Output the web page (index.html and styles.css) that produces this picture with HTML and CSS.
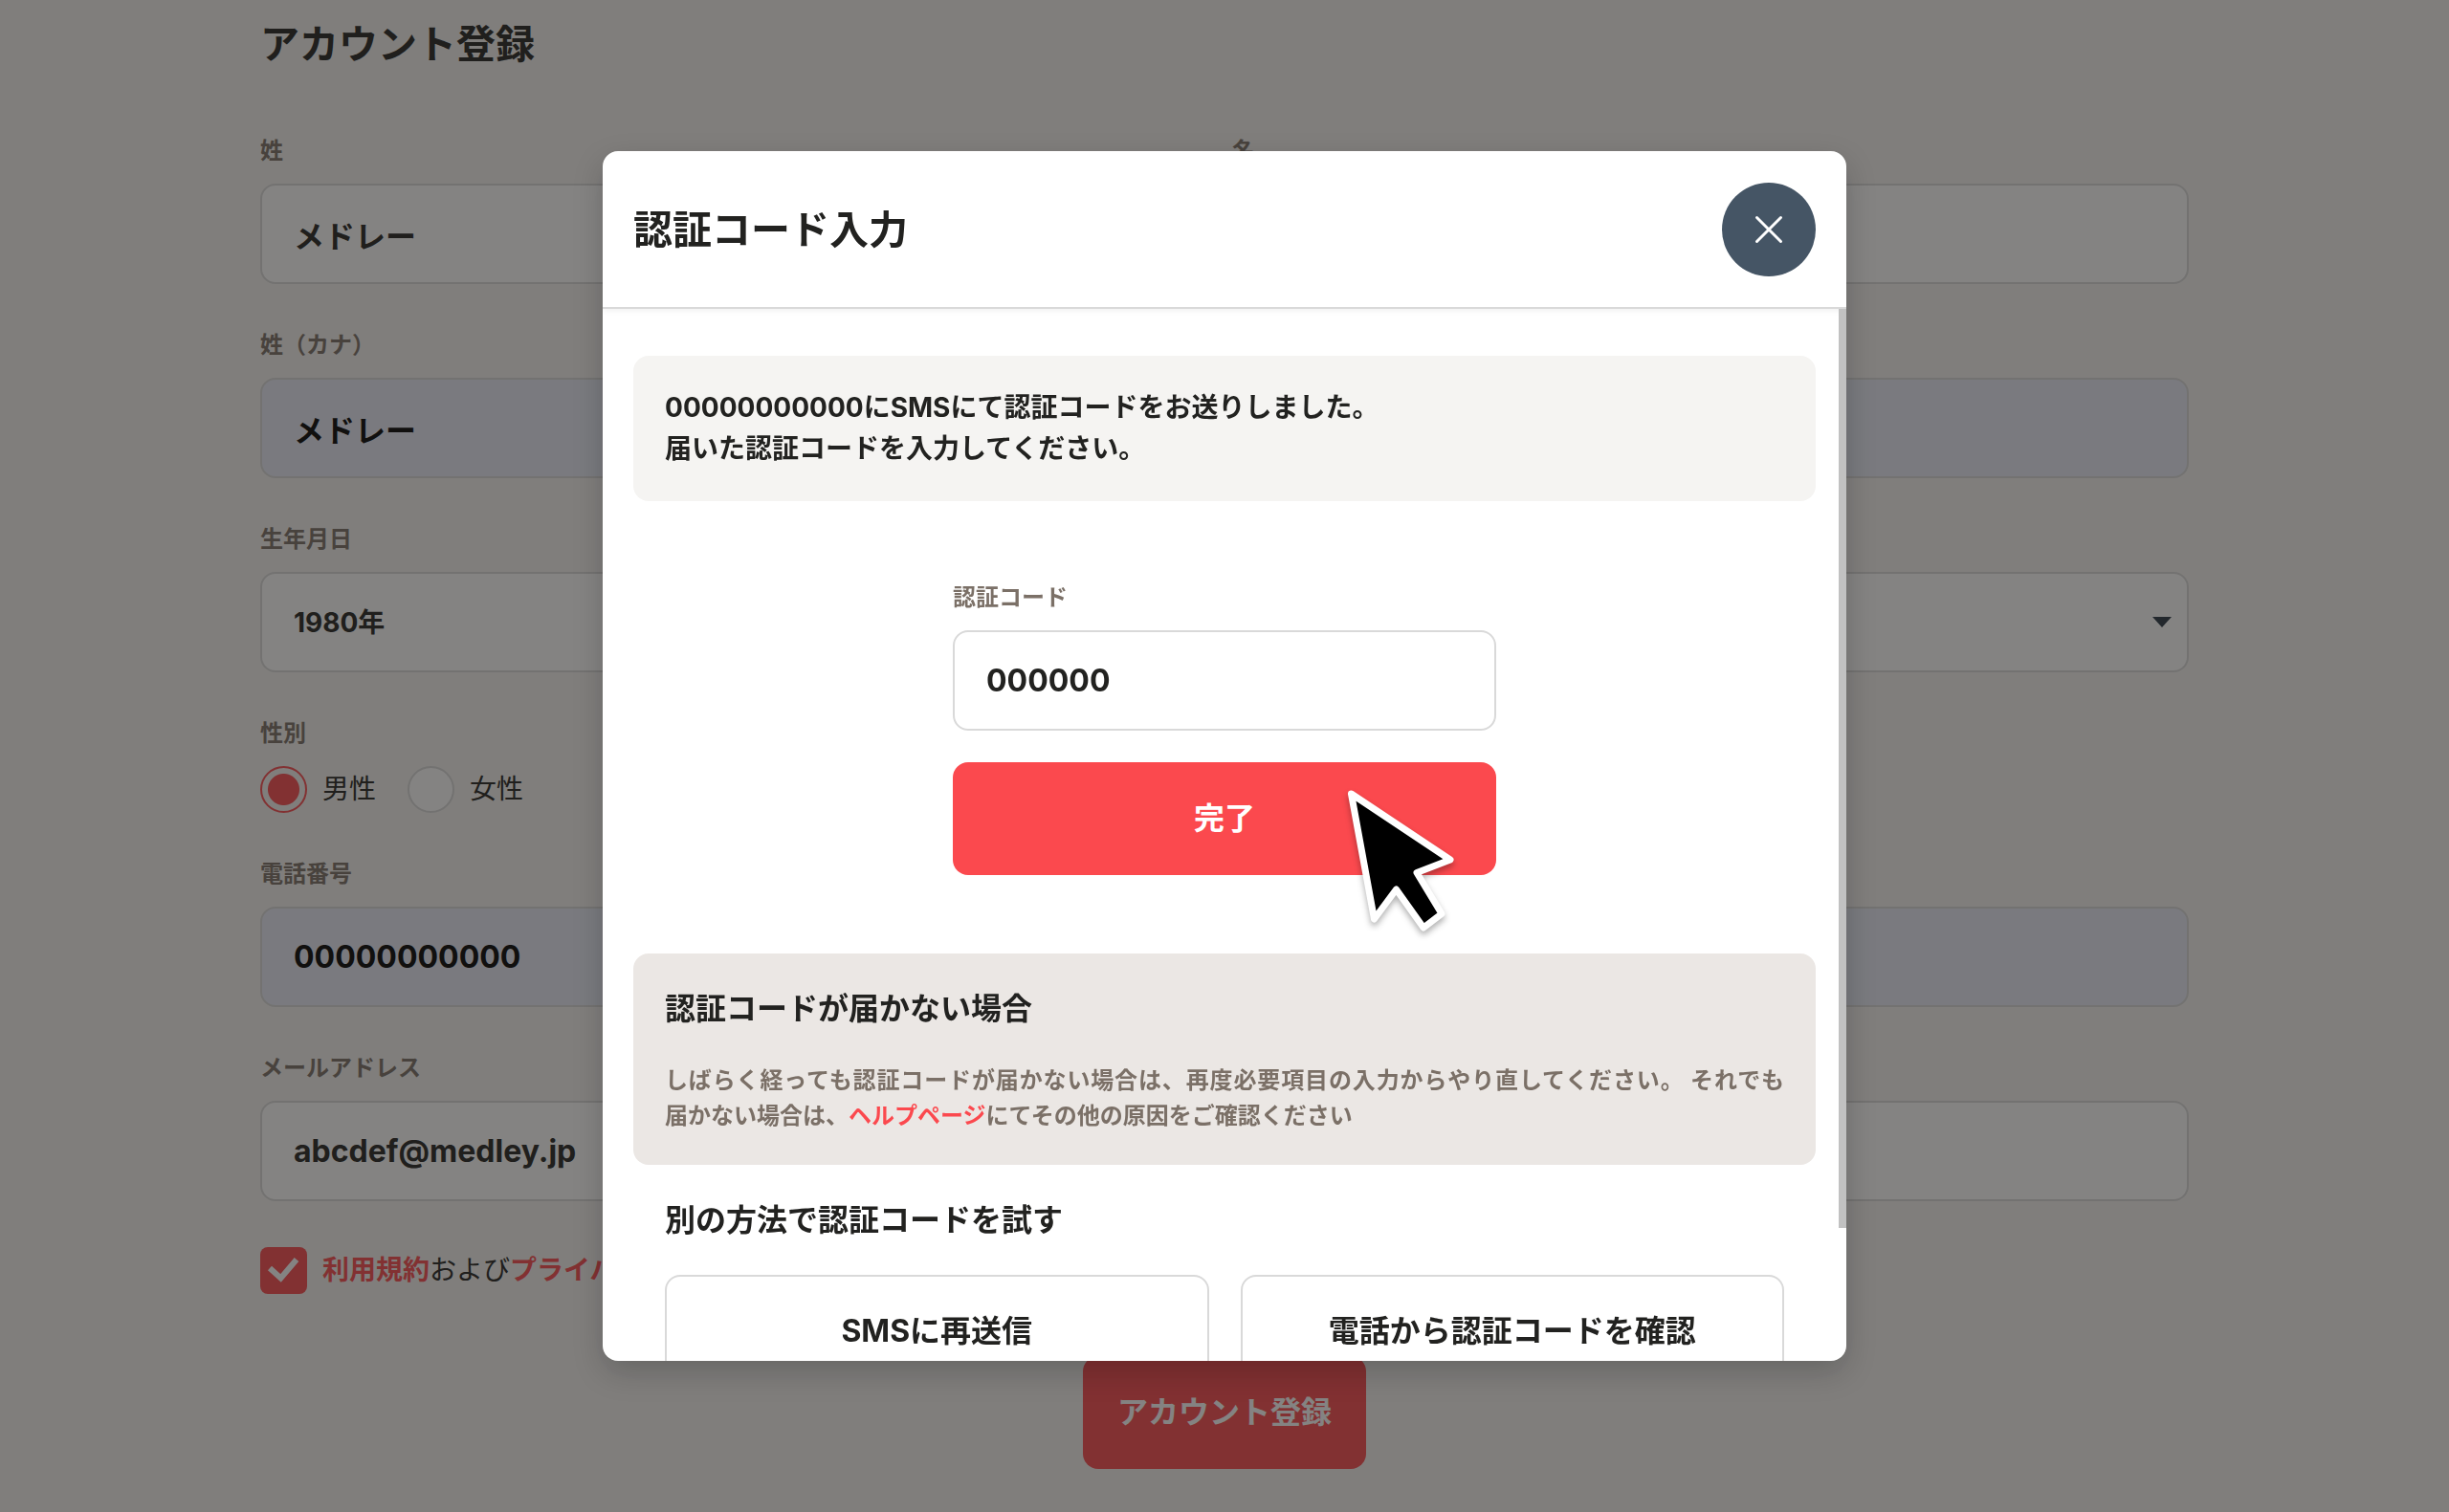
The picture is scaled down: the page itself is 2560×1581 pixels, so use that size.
FILE: index.html
```html
<!DOCTYPE html>
<html lang="ja">
<head>
<meta charset="utf-8">
<meta name="viewport" content="width=device-width, initial-scale=1">
<title>アカウント登録</title>
<link rel="stylesheet" href="styles.css">
</head>
<body>
<main class="page">
  <h1 class="page-title">アカウント登録</h1>
  <form class="form">
    <div class="row row-two">
      <div class="field">
        <label class="label" for="last-name">姓</label>
        <input class="input" id="last-name" type="text" value="メドレー">
      </div>
      <div class="field">
        <label class="label" for="first-name">名</label>
        <input class="input" id="first-name" type="text">
      </div>
    </div>
    <div class="row row-two">
      <div class="field">
        <label class="label" for="last-kana">姓（カナ）</label>
        <input class="input input-filled" id="last-kana" type="text" value="メドレー">
      </div>
      <div class="field">
        <label class="label" for="first-kana">名（カナ）</label>
        <input class="input input-filled" id="first-kana" type="text">
      </div>
    </div>
    <div class="field">
      <label class="label" for="birth-year">生年月日</label>
      <div class="row row-three">
        <select class="input select" id="birth-year"><option>1980年</option></select>
        <select class="input select" aria-label="月"><option>1月</option></select>
        <select class="input select" aria-label="日"><option></option></select>
      </div>
    </div>
    <fieldset class="field fieldset">
      <legend class="label">性別</legend>
      <div class="radios">
        <label class="choice"><input class="radio" type="radio" name="sex" checked>男性</label>
        <label class="choice"><input class="radio" type="radio" name="sex">女性</label>
      </div>
    </fieldset>
    <div class="field">
      <label class="label" for="phone">電話番号</label>
      <input class="input input-filled" id="phone" type="tel" value="00000000000">
    </div>
    <div class="field">
      <label class="label" for="email">メールアドレス</label>
      <input class="input" id="email" type="email" value="abcdef@medley.jp">
    </div>
    <div class="form-end">
      <div class="choice">
        <input class="checkbox" id="agree" type="checkbox" checked>
        <label for="agree"><a class="link" href="#">利用規約</a>および<a class="link" href="#">プライバシーポリシー</a>に同意する</label>
      </div>
      <button class="button button-primary submit" type="button">アカウント登録</button>
    </div>
  </form>
</main>

<div class="overlay">
  <section class="modal" role="dialog" aria-modal="true" aria-labelledby="modal-title">
    <header class="modal-header">
      <h2 class="modal-title" id="modal-title">認証コード入力</h2>
      <button class="close" type="button" aria-label="閉じる">
        <svg width="34" height="34" viewBox="0 0 34 34" fill="none" stroke="#fff" stroke-width="3" stroke-linecap="round"><path d="M4.500 4.500 29.500 29.500M29.500 4.500 4.500 29.500"/></svg>
      </button>
    </header>
    <div class="modal-body">
      <p class="notice">00000000000にSMSにて認証コードをお送りしました。<br>届いた認証コードを入力してください。</p>
      <form class="code-form">
        <div class="field">
          <label class="label" for="code">認証コード</label>
          <input class="input" id="code" type="text" inputmode="numeric" value="000000">
        </div>
        <div class="code-action">
          <button class="button button-primary button-wide" type="button">完了</button>
          <svg class="pointer" width="130" height="170" viewBox="0 0 130 170"><path d="M12.500 14 116 83 81 96.500 107 139.500 88 154 59.500 114 36.500 145Z" fill="#000" stroke="#fff" stroke-width="7" stroke-linejoin="round"/></svg>
        </div>
      </form>
      <section class="help">
        <h3 class="subtitle">認証コードが届かない場合</h3>
        <p class="help-text">しばらく経っても認証コードが届かない場合は、再度必要項目の入力からやり直してください。 それでも<span class="phrase">届かない場合は、</span><a class="link" href="#">ヘルプページ</a>にてその他の原因をご確認ください</p>
      </section>
      <section class="other">
        <h3 class="subtitle">別の方法で認証コードを試す</h3>
        <div class="other-actions">
          <button class="button button-outline" type="button">SMSに再送信</button>
          <button class="button button-outline" type="button">電話から認証コードを確認</button>
        </div>
      </section>
    </div>
    <div class="scrollbar"></div>
  </section>
</div>
</body>
</html>
```
FILE: styles.css
```css
:root {
  --ink: #222220;
  --muted: #7b7067;
  --red: #fb494e;
  --line: #d9d9d9;
  --slate: #455565;
}

* {
  box-sizing: border-box;
}

body {
  margin: 0;
  background: #f5f4f2;
  color: var(--ink);
  font-family: Inter, "Noto Sans CJK JP", sans-serif;
  font-size: 28px;
  line-height: 43px;
}

h1, h2, h3, p {
  margin: 0;
}

.page {
  max-width: 2560px;
  margin: 0 auto;
  padding: 16px 272px 45px;
}

.page-title,
.modal-title {
  font-size: 41px;
  line-height: 61px;
  font-weight: 700;
}

.page-title {
  margin-bottom: 62px;
}

.form {
  display: flex;
  flex-direction: column;
  gap: 45px;
}

.row {
  display: grid;
  gap: 16px;
}

.row-two {
  grid-template-columns: 1fr 1fr;
}

.row-three {
  grid-template-columns: 1fr 1fr 1fr;
}

.field {
  display: flex;
  flex-direction: column;
  gap: 16px;
}

.fieldset {
  display: block;
  min-width: 0;
  margin: 0;
  padding: 0;
  border: 0;
}

.label {
  padding: 0;
  color: var(--muted);
  font-size: 24px;
  line-height: 37px;
  font-weight: 700;
}

.input {
  width: 100%;
  height: 105px;
  padding: 0 33px;
  border: 2px solid var(--line);
  border-radius: 16px;
  background: #fff;
  color: var(--ink);
  font: 700 32px/48px Inter, "Noto Sans CJK JP", sans-serif;
}

.input-filled {
  background: #e8ecf8;
  color: #000;
}

.select {
  appearance: none;
  font-size: 28px;
  background: #fff url("data:image/svg+xml,%3Csvg xmlns='http://www.w3.org/2000/svg' width='20' height='11'%3E%3Cpath d='M0 0h20L10 11z' fill='%23283644'/%3E%3C/svg%3E") no-repeat right 16px center;
}

.radios {
  display: flex;
  gap: 33px;
  padding-top: 16px;
}

.choice {
  display: flex;
  align-items: center;
  gap: 16px;
  height: 49px;
  font-weight: 400;
}

.radio,
.checkbox {
  flex: none;
  appearance: none;
  width: 49px;
  height: 49px;
  margin: 0;
  border: 2px solid var(--line);
  background: #fff;
}

.radio {
  border-radius: 50%;
}

.radio:checked {
  border-color: var(--red);
  background: radial-gradient(circle, var(--red) 16px, transparent 17px);
}

.checkbox {
  border: 0;
  border-radius: 8px;
}

.checkbox:checked {
  background: var(--red) url("data:image/svg+xml,%3Csvg xmlns='http://www.w3.org/2000/svg' width='49' height='49'%3E%3Cpath d='M10 22 21.500 32.500 38 13' fill='none' stroke='%23fff' stroke-width='6'/%3E%3C/svg%3E");
}

.form-end {
  display: flex;
  flex-direction: column;
  gap: 65px;
  padding-top: 3px;
}

.link {
  color: var(--red);
  font-weight: 700;
  text-decoration: none;
}

.button {
  height: 118px;
  padding: 0 33px;
  border: 0;
  border-radius: 16px;
  color: var(--ink);
  font: 700 32px/48px Inter, "Noto Sans CJK JP", sans-serif;
}

.button-primary {
  background: var(--red);
  color: #fff;
}

.button-outline {
  border: 2px solid var(--line);
  background: #fff;
}

.button-wide {
  width: 100%;
}

.submit {
  align-self: center;
  padding: 0 36px;
}

.overlay {
  position: fixed;
  inset: 0;
  display: flex;
  align-items: center;
  justify-content: center;
  background: rgba(31, 30, 28, 0.55);
}

.modal {
  position: relative;
  display: flex;
  flex-direction: column;
  width: 100%;
  max-width: 1300px;
  height: 80vh;
  overflow: hidden;
  border-radius: 16px;
  background: #fff;
  box-shadow: 0 12px 32px rgba(0, 0, 0, 0.2);
}

.modal-header {
  display: flex;
  flex: none;
  align-items: center;
  justify-content: space-between;
  padding: 33px 32px 32px;
  border-bottom: 2px solid var(--line);
  box-shadow: 0 2px 6px rgba(0, 0, 0, 0.06);
}

.close {
  display: flex;
  align-items: center;
  justify-content: center;
  width: 98px;
  height: 98px;
  padding: 0;
  border: 0;
  border-radius: 50%;
  background: var(--slate);
}

.modal-body {
  flex: 1;
  min-height: 0;
  padding: 49px 32px 130px;
  overflow-y: auto;
  scrollbar-width: none;
}

.scrollbar {
  position: absolute;
  top: 165px;
  right: 0;
  width: 8px;
  height: 76%;
  background: #c1c1c1;
}

.notice {
  padding: 33px;
  border-radius: 16px;
  background: #f5f4f2;
  font-weight: 700;
}

.code-form {
  display: flex;
  flex-direction: column;
  gap: 33px;
  max-width: 568px;
  margin: 82px auto;
}

.code-action {
  position: relative;
}

.pointer {
  position: absolute;
  top: 19px;
  left: 404px;
  filter: drop-shadow(0 4px 3px rgba(0, 0, 0, 0.3));
}

.help {
  padding: 33px;
  border-radius: 16px;
  background: #ebe7e4;
}

.subtitle {
  font-size: 32px;
  line-height: 49px;
  font-weight: 700;
}

.help-text {
  margin-top: 32px;
  color: var(--muted);
  font-size: 24px;
  line-height: 37px;
  font-weight: 700;
  text-align: justify;
}

.phrase {
  white-space: nowrap;
}

.other {
  padding: 33px;
}

.other-actions {
  display: grid;
  grid-template-columns: 1fr 1fr;
  gap: 33px;
  margin-top: 33px;
}
```
